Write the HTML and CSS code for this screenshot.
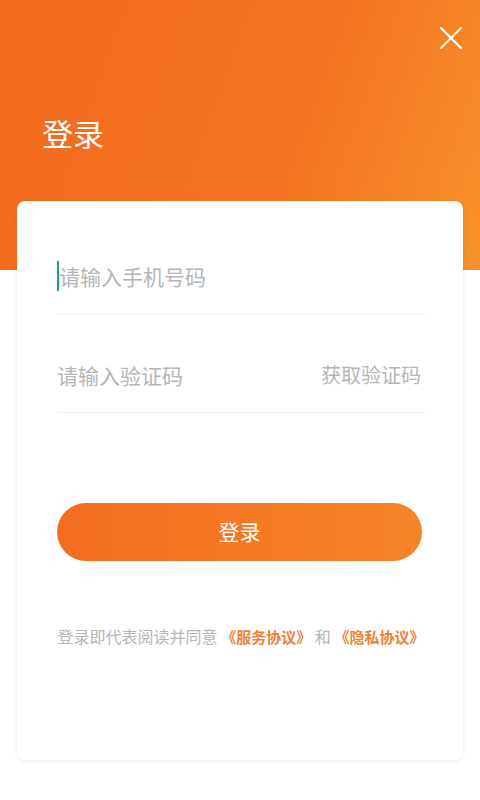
FILE: index.html
```html
<!DOCTYPE html>
<html lang="zh-CN">
<head>
<meta charset="utf-8">
<title>登录</title>
<link rel="stylesheet" href="styles.css">
</head>
<body>
<div class="page">
  <header class="hero">
    <div class="hero-top">
      <svg class="close" width="24" height="24" viewBox="0 0 24 24" aria-label="关闭">
        <path d="M2 2 L22 22 M22 2 L2 22" stroke="#fff" stroke-width="2.2" stroke-linecap="round" fill="none"/>
      </svg>
    </div>
    <h1 class="title">登录</h1>
  </header>
  <main class="card">
    <div class="row row-first">
      <span class="cursor"></span>
      <span class="placeholder">请输入手机号码</span>
    </div>
    <div class="row">
      <span class="placeholder">请输入验证码</span>
      <span class="get-code">获取验证码</span>
    </div>
    <button class="login-btn">登录</button>
    <p class="agree">登录即代表阅读并同意 <span class="link">《服务协议》</span> 和 <span class="link">《隐私协议》</span></p>
  </main>
</div>
</body>
</html>
```
FILE: styles.css
```css
* { box-sizing: border-box; }
html, body {
  margin: 0;
  padding: 0;
  background: #ffffff;
  font-family: "Noto Sans CJK SC", "Noto Sans", sans-serif;
}
.page {
  width: 480px;
  height: 800px;
  overflow: hidden;
}
.hero {
  height: 270px;
  background: linear-gradient(110deg, #f26a1e 0%, #f47322 60%, #f8922b 100%);
  display: flex;
  flex-direction: column;
  padding: 26px 17px 0 42px;
}
.hero-top {
  display: flex;
  justify-content: flex-end;
}
.close {
  display: block;
  width: 24px;
  height: 24px;
}
.title {
  margin: 63px 0 0 0;
  font-size: 31px;
  line-height: 40px;
  font-weight: 400;
  color: #ffffff;
}
.card {
  margin: -69px 17px 0 17px;
  height: 559px;
  background: #ffffff;
  border-radius: 8px;
  box-shadow: 0 1px 4px rgba(0, 0, 0, 0.08);
  padding: 14px 38px 0 40px;
  display: flex;
  flex-direction: column;
}
.row {
  display: flex;
  align-items: center;
  justify-content: space-between;
  height: 98px;
  padding: 45px 0 23px 0;
  border-bottom: 1px solid #f2f2f2;
}
.row-first {
  justify-content: flex-start;
  height: 100px;
  padding: 46px 0 24px 0;
}
.placeholder {
  font-size: 21px;
  line-height: 30px;
  color: #b5b5b5;
}
.cursor {
  width: 2px;
  height: 30px;
  background: #1f9c88;
}
.get-code {
  font-size: 20px;
  line-height: 30px;
  color: #b5b5b5;
  margin-right: 4px;
}
.login-btn {
  margin: 90px 0 0 0;
  width: 365px;
  height: 58px;
  border: none;
  border-radius: 29px;
  background: linear-gradient(90deg, #f36d20 0%, #f68427 100%);
  color: #ffffff;
  font-family: inherit;
  font-size: 21px;
  padding: 0 0 3px 0;
}
.agree {
  margin: 65px -6px 0 -6px;
  font-size: 16px;
  line-height: 20px;
  color: #b5b5b5;
  text-align: center;
  white-space: nowrap;
}
.link {
  color: #f08036;
  font-weight: 700;
  font-size: 15px;
}
```
